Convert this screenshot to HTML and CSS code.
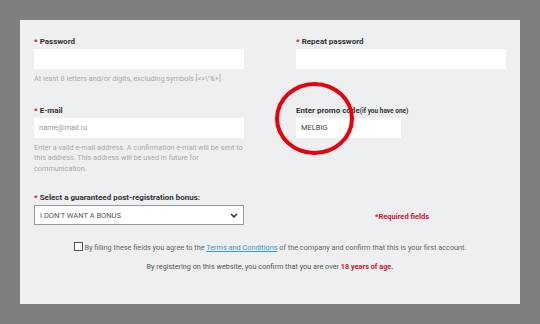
FILE: index.html
```html
<!DOCTYPE html>
<html lang="en">
<head>
    <meta charset="UTF-8">
    <meta name="viewport" content="width=device-width, initial-scale=1.0">
    <title>Registration</title>
    <link rel="stylesheet" href="styles.css">
</head>
<body>
    <div id="box">
        <div class="grid">
            <div class="field">
                <label><span class="req">*</span> Password</label>
                <div class="input"></div>
                <p class="hint">At least 8 letters and/or digits, excluding symbols [&lt;&gt;\"&amp;+]</p>
            </div>
            <div class="field">
                <label><span class="req">*</span> Repeat password</label>
                <div class="input"></div>
            </div>

            <div class="field row2">
                <label><span class="req">*</span> E-mail</label>
                <div class="input placeholder">name@mail.ru</div>
                <p class="hint">Enter a valid e-mail address. A confirmation e-mail will be sent to this address. This address will be used in future for communication.</p>
            </div>
            <div class="field row2 promo">
                <label>Enter promo code<small>(if you have one)</small></label>
                <div class="input short">MELBIG</div>
                <div class="circle"></div>
            </div>

            <div class="field row3">
                <label><span class="req">*</span> Select a guaranteed post-registration bonus:</label>
                <div class="select">
                    <span>I DON'T WANT A BONUS</span>
                    <svg width="8" height="5" viewBox="0 0 8 5"><path d="M1 1 L4 3.8 L7 1" fill="none" stroke="#333" stroke-width="1.6"/></svg>
                </div>
            </div>
            <div class="field row3 required">*Required fields</div>
        </div>

        <p class="agree"><span class="check"></span> By filling these fields you agree to the <a href="#">Terms and Conditions</a> of the company and confirm that this is your first account.</p>
        <p class="age">By registering on this website, you confirm that you are over <b>18 years of age.</b></p>
    </div>
</body>
</html>
```

FILE: styles.css
```css
body {
    font-family: Roboto, "Liberation Sans", sans-serif;
    margin: 0;
    padding: 20px;
    background-color: #7f7f7f;
    height: 324px;
    box-sizing: border-box;
}
#box {
    width: 500px;
    height: 284px;
    background-color: #eeeff1;
    padding: 17px 14px 0 14px;
    box-sizing: border-box;
}
.grid {
    display: grid;
    grid-template-columns: 210px 210px;
    column-gap: 52px;
}
.field {
    position: relative;
}
label {
    display: block;
    font-size: 8px;
    font-weight: bold;
    color: #333;
    height: 12px;
    line-height: 10px;
}
label small {
    font-size: 6.5px;
}
.req {
    color: #d0152b;
}
.input {
    height: 20px;
    background: #fff;
    font-size: 7.5px;
    color: #444;
    line-height: 20px;
    padding-left: 5px;
}
.input.placeholder {
    color: #999;
}
.input.short {
    width: 100px;
}
.hint {
    font-size: 7.3px;
    color: #aaa;
    margin: 5px 0 0;
    line-height: 10.5px;
}
.row2 {
    margin-top: 21px;
}
.row3 {
    margin-top: 19px;
}
.select {
    height: 20px;
    background: #fff;
    border: 1px solid #999;
    box-sizing: border-box;
    display: flex;
    align-items: center;
    justify-content: space-between;
    padding: 0 5px 0 5px;
    font-size: 7.5px;
    color: #555;
}
.required {
    color: #d0152b;
    font-size: 7.5px;
    font-weight: bold;
    padding: 19px 0 0 79px;
}
.circle {
    position: absolute;
    left: -21px;
    top: -24px;
    width: 71px;
    height: 65px;
    border: 4px solid #e8000b;
    border-radius: 50%;
}
.agree {
    margin: 17px 0 0;
    font-size: 7.3px;
    color: #666;
    text-align: center;
    line-height: 10px;
}
.agree a {
    color: #3a9ac4;
}
.check {
    display: inline-block;
    vertical-align: -1px;
    width: 7px;
    height: 7px;
    border: 1px solid #555;
    background: #fff;
}
.age {
    margin: 9px 0 0;
    font-size: 7.3px;
    color: #555;
    text-align: center;
}
.age b {
    color: #d0152b;
}
```
